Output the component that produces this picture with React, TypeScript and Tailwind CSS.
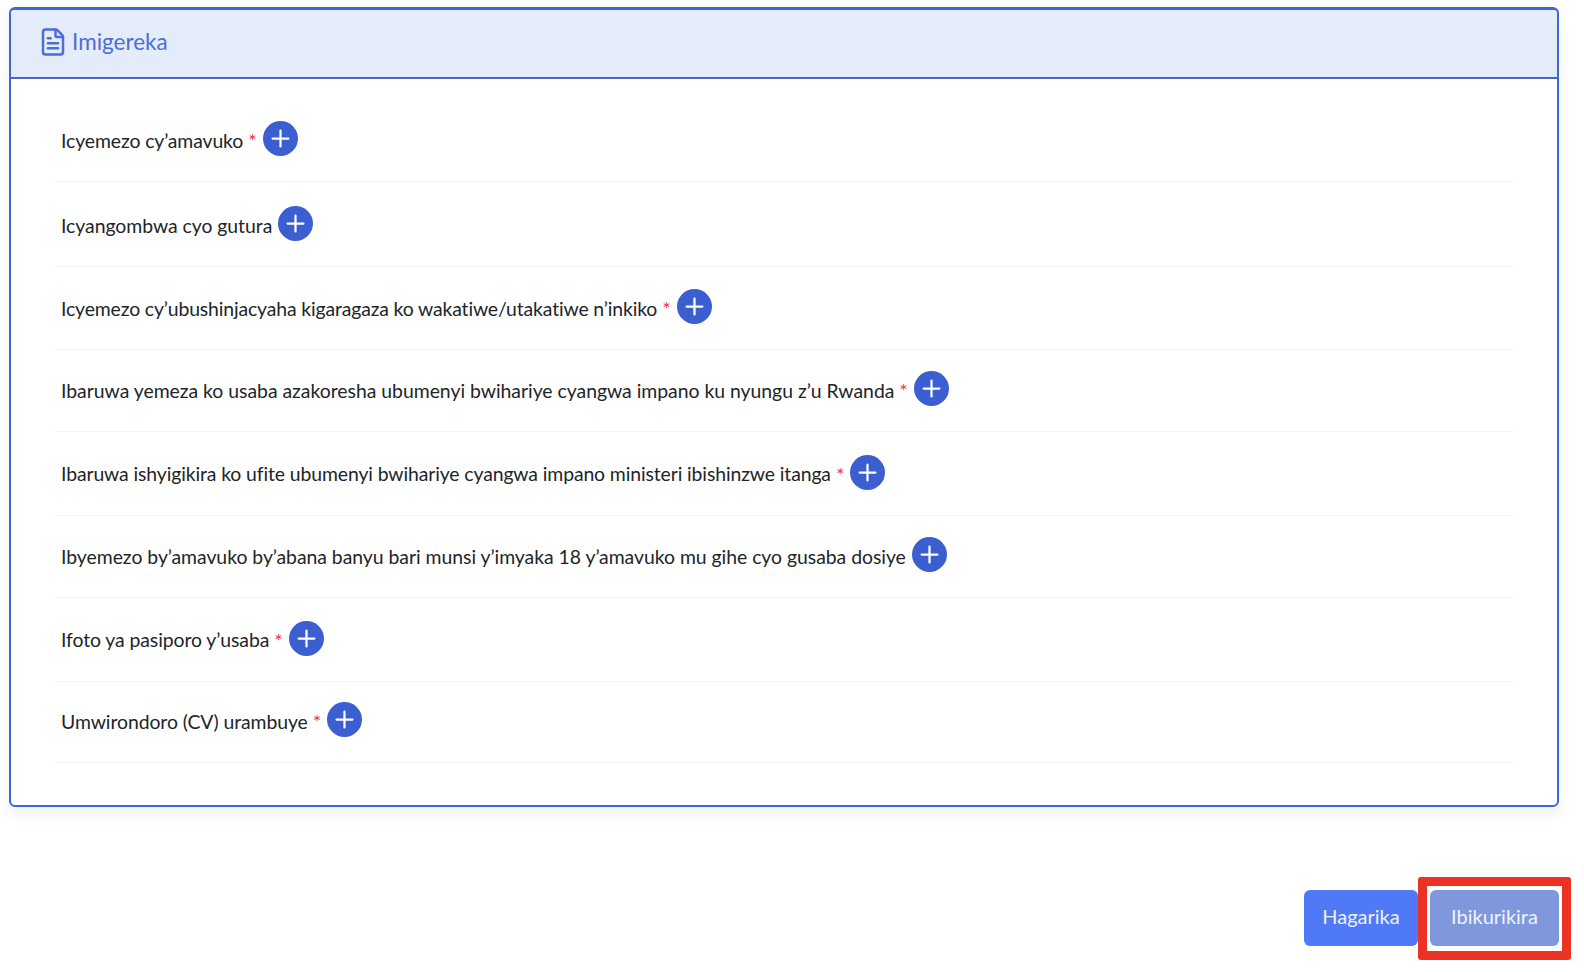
import { FileText, Plus } from 'lucide-react';

const rows = [
  { label: 'Icyemezo cy’amavuko', required: true, height: 'h-[84px] pb-[2px]', text: 'pt-[5px] tracking-[-0.1px]' },
  { label: 'Icyangombwa cyo gutura', required: false, height: 'h-[85px] pb-[2px]', text: 'pt-[5px] tracking-[-0.04px]' },
  { label: 'Icyemezo cy’ubushinjacyaha kigaragaza ko wakatiwe/utakatiwe n’inkiko', required: true, height: 'h-[83px] pb-[4px]', text: 'pt-[5px] tracking-[-0.14px]' },
  { label: 'Ibaruwa yemeza ko usaba azakoresha ubumenyi bwihariye cyangwa impano ku nyungu z’u Rwanda', required: true, height: 'h-[82px] pb-[4px]', text: 'pt-[5px] tracking-[-0.02px]' },
  { label: 'Ibaruwa ishyigikira ko ufite ubumenyi bwihariye cyangwa impano ministeri ibishinzwe itanga', required: true, height: 'h-[84px] pb-[2px]', text: 'pt-[3px] tracking-[-0.11px]' },
  { label: 'Ibyemezo by’amavuko by’abana banyu bari munsi y’imyaka 18 y’amavuko mu gihe cyo gusaba dosiye', required: false, height: 'h-[82px] pb-[4px]', text: 'pt-[5px] tracking-[-0.03px]' },
  { label: 'Ifoto ya pasiporo y’usaba', required: true, height: 'h-[84px] pb-[2px]', text: 'pt-[3px] tracking-[-0.08px]' },
  { label: 'Umwirondoro (CV) urambuye', required: true, height: 'h-[81px] pb-[6px]', text: 'pt-[5px] tracking-[-0.08px]' },
];

function DocRow({ label, required, height, text }: { label: string; required: boolean; height: string; text: string }) {
  return (
    <div className={`flex items-center border-b border-[#f3f4f6] pl-[6px] ${height}`}>
      <span className={`text-[19.4px] leading-6 text-[#212529] ${text}`}>{label}</span>
      {required && <span className="ml-[5px] text-[20px] leading-6 text-[#e8384f] pt-[3px]">*</span>}
      <button className="ml-[6px] w-[35px] h-[35px] rounded-full bg-[#3b5fd0] flex items-center justify-center text-white">
        <Plus size={27} strokeWidth={2} />
      </button>
    </div>
  );
}

export default function App() {
  return (
    <div className="w-[1584px] h-[972px] bg-white overflow-hidden font-['Lato','Noto_Sans',sans-serif] [font-variant-ligatures:none]">
      <div className="pt-[7px] pl-[9px] pr-[25px]">
        <div className="h-[800px] border-2 border-t-[3px] border-[#3f66d4] rounded-[6px] overflow-hidden bg-white shadow-[0_8px_16px_rgba(0,0,0,0.06)]">
          <div className="h-[69px] bg-[#e4ebf9] border-b-2 border-[#3f66d4] flex items-center pl-[27px] pb-[3px] text-[#4a6fd6]">
            <FileText size={30} strokeWidth={2} />
            <span className="ml-[4px] text-[22.5px]">Imigereka</span>
          </div>
          <div className="pt-[19px] pl-[44px] pr-[44px]">
            {rows.map((row) => (
              <DocRow key={row.label} {...row} />
            ))}
          </div>
        </div>
      </div>
      <div className="flex justify-end items-center pr-[13px] mt-[70px]">
        <button className="w-[114px] h-[56px] mb-[2px] pb-[3px] rounded-[6px] bg-[#4f79f7] text-[#eef2ff] text-[20px]">Hagarika</button>
        <div className="w-[153px] h-[83px] pb-[2px] rounded-[3px] border-[9px] border-[#ec3323] flex items-center justify-center">
          <button className="w-[129px] h-[56px] pb-[3px] rounded-[6px] bg-[#7f98dd] text-[#eef2ff] text-[20px]">Ibikurikira</button>
        </div>
      </div>
    </div>
  );
}
